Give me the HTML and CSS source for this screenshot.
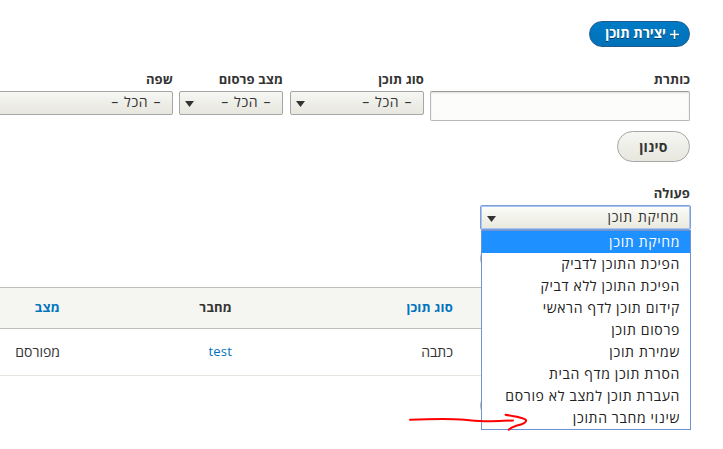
FILE: index.html
```html
<!DOCTYPE html>
<html lang="he" dir="rtl">
<head>
<meta charset="utf-8">
<title>ניהול תוכן</title>
<link rel="stylesheet" href="styles.css">
</head>
<body>
<main class="page">
  <a class="create"><svg class="plus" width="9" height="9" viewBox="0 0 9 9"><path d="M4.500 0V9M0 4.500H9" stroke="#fff" stroke-width="1.600"/></svg><span>יצירת תוכן</span></a>
  <form class="filters">
    <div class="field field-title"><label>כותרת</label><input class="textbox" type="text"></div>
    <div class="field field-type"><label>סוג תוכן</label><div class="select"><span>– הכל –</span><i class="caret"></i></div></div>
    <div class="field field-status"><label>מצב פרסום</label><div class="select"><span>– הכל –</span><i class="caret"></i></div></div>
    <div class="field field-lang"><label>שפה</label><div class="select"><span>– הכל –</span></div></div>
  </form>
  <button class="pill filter">סינון</button>
  <section class="action">
    <label>פעולה</label>
    <div class="select open"><span>מחיקת תוכן</span><i class="caret"></i></div>
    <div class="pill apply"></div>
    <ul class="menu">
      <li class="selected">מחיקת תוכן</li>
      <li>הפיכת התוכן לדביק</li>
      <li>הפיכת התוכן ללא דביק</li>
      <li>קידום תוכן לדף הראשי</li>
      <li>פרסום תוכן</li>
      <li>שמירת תוכן</li>
      <li>הסרת תוכן מדף הבית</li>
      <li>העברת תוכן למצב לא פורסם</li>
      <li>שינוי מחבר התוכן</li>
    </ul>
  </section>
  <div class="table">
    <div class="row head"><span></span><a>סוג תוכן</a><span>מחבר</span><a>מצב</a></div>
    <div class="row"><span></span><span>כתבה</span><a class="author">test</a><span>מפורסם</span></div>
  </div>
  <div class="pill apply bottom"></div>
</main>
<svg class="arrow" width="130" height="30" viewBox="400 410 130 30" fill="none" stroke="#f00" stroke-width="2" stroke-linecap="round" stroke-linejoin="round"><path d="M410 419.7C425 419.2 440 419 454 419.2C466 419.4 474 421.2 488 421.3C498 421.3 506 420.6 513 420.5M505.500 414.700C512 416.200 521 416.500 525.500 419.500C528 422 522 424.500 517 425.500C512 427 510.500 428 508.700 429.700"/></svg>
</body>
</html>
```

FILE: styles.css
```css
* { box-sizing: border-box; }
html, body { margin: 0; height: 449px; overflow: hidden; background: #fff; }
body { position: relative; font: 14px/22px "Open Sans", "Liberation Sans", sans-serif; color: #333; }
.page { padding: 21px 33px 0 0; }
a { color: #0074bd; text-decoration: none; }
label { display: block; height: 22px; font-weight: 700; font-size: 13px; line-height: 20px; letter-spacing: .1px; white-space: nowrap; }
.create { display: flex; align-items: center; gap: 4px; width: 101px; height: 26px; padding-right: 10px; border: 1px solid #1e5c90; border-radius: 13px; background: linear-gradient(#007bc6, #0071b8); color: #fff; font-weight: 700; font-size: 13.5px; line-height: 22px; text-shadow: 0 1px rgba(0, 0, 0, .5); white-space: nowrap; }
.create span { margin-top: -2px; }
.plus { flex: none; filter: drop-shadow(0 1px rgba(0, 0, 0, .4)); }
.filters { display: flex; gap: 7px; margin-top: 22px; height: 52px; }
.field { flex: none; }
.field-title { width: 260px; }
.field-type { width: 134px; margin-right: -1px; }
.field-status { width: 104px; }
.field-lang { width: 190px; margin-right: -1px; }
.textbox { display: block; width: 260px; height: 30px; border: 1px solid #b8b8b8; border-top-color: #999; border-radius: 2px; background: #fcfcfa; box-shadow: inset 0 1px 2px rgba(0, 0, 0, .12); }
.select { display: flex; justify-content: space-between; height: 24px; padding: 0 11px 0 5px; border: 1px solid #a6a6a6; border-radius: 2px; background: linear-gradient(#f6f6f3, #e7e7df); line-height: 20px; letter-spacing: .6px; word-spacing: 1px; white-space: nowrap; }
.caret { width: 9px; height: 6px; margin-top: 9px; background: #333; clip-path: polygon(0 0, 100% 0, 50% 100%); }
.pill { display: block; height: 31px; border: 1px solid #a6a6a6; border-radius: 16px; background: linear-gradient(#f6f6f3, #e7e7df); }
.filter { width: 73px; margin: 10px 0 0; padding: 0; font: 700 14px/27px "Open Sans", "Liberation Sans", sans-serif; letter-spacing: .3px; color: #333; }
.action { position: relative; height: 104px; padding-top: 21px; width: 210px; }
.open { width: 211px; height: 25px; margin-right: -1px; border: 1px solid #7d9edb; box-shadow: inset 0 0 0 1px #a9c4ee; background: linear-gradient(#fcfcfa, #e9e9dd); line-height: 22px; }
.open .caret { margin-top: 10px; margin-left: 1px; }
.apply { width: 210px; margin-top: 13px; }
.menu { position: absolute; z-index: 2; top: 68px; right: -1px; width: 210px; height: 200px; margin: 0; padding: 0; border: 1px solid #6f93d2; background: #fff; color: #222; letter-spacing: .65px; list-style: none; }
.menu li { height: 22px; padding-right: 10px; line-height: 21px; white-space: nowrap; }
.menu .selected { background: #1e90ff; color: #fff; }
.table { margin-top: 21px; }
.row { display: grid; grid-template-columns: 237px 221px 172px 60px; height: 47px; border-bottom: 1px solid #e6e4df; line-height: 45px; white-space: nowrap; }
.head { height: 42px; border-top: 1px solid #bfbfba; border-bottom: 1px solid #bfbfba; background: #f5f5f2; font-weight: 700; font-size: 13px; letter-spacing: .2px; line-height: 39px; }
.author { font-size: 13px; letter-spacing: .2px; }
.bottom { margin-top: 14px; }
.arrow { position: absolute; z-index: 3; left: 400px; top: 410px; }
```
